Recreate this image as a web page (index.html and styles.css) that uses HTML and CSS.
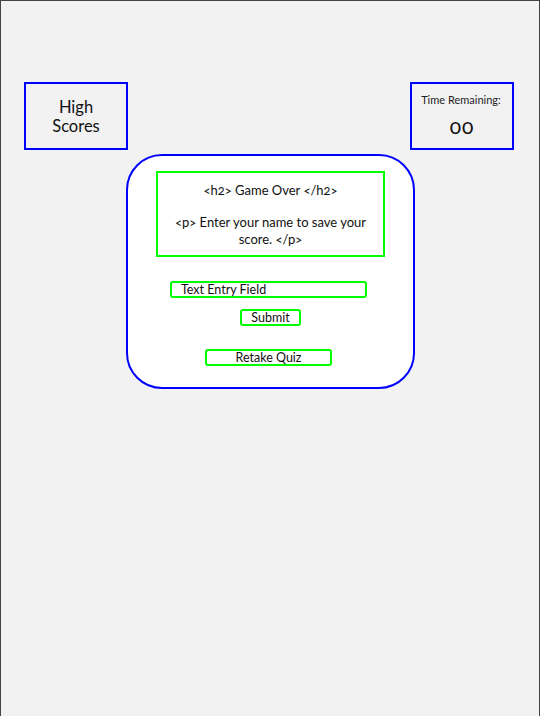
FILE: index.html
```html
<!DOCTYPE html>
<html>
<head>
<meta charset="utf-8">
<link rel="stylesheet" href="styles.css">
</head>
<body>
<div class="frame">
  <header class="top">
    <div class="box scores">High<br>Scores</div>
    <div class="box timer">
      <div class="timer-label">Time Remaining:</div>
      <div class="timer-value">00</div>
    </div>
  </header>
  <main class="card">
    <div class="message">
      <div class="msg-title">&lt;h2&gt; Game Over &lt;/h2&gt;</div>
      <div class="msg-text">&lt;p&gt; Enter your name to save your score. &lt;/p&gt;</div>
    </div>
    <div class="field">Text Entry Field</div>
    <div class="btn submit">Submit</div>
    <div class="btn retake">Retake Quiz</div>
  </main>
</div>
</body>
</html>
```
FILE: styles.css
```css
html, body {
  margin: 0;
  padding: 0;
}
body {
  background: #f2f2f2;
  font-family: Lato, "Open Sans", sans-serif;
  color: #111;
  font-variant-numeric: oldstyle-nums;
}
.frame {
  box-sizing: border-box;
  height: 716px;
  border-top: 1px solid #444;
  border-left: 1px solid #444;
  border-right: 1px solid #444;
  padding: 81px 25px 0 23px;
}
.top {
  display: flex;
  justify-content: space-between;
}
.box {
  box-sizing: border-box;
  width: 104px;
  height: 68px;
  border: 2px solid #0000ff;
}
.scores {
  display: flex;
  align-items: center;
  justify-content: center;
  text-align: center;
  font-size: 16.5px;
  line-height: 19px;
  padding-top: 2px;
}
.timer {
  display: flex;
  flex-direction: column;
  align-items: center;
  padding-top: 9px;
}
.timer-label {
  font-size: 11px;
  line-height: 14px;
  color: #222;
  margin-left: -2px;
}
.timer-value {
  margin-top: 9px;
  font-size: 21px;
  line-height: 20px;
  letter-spacing: 1px;
}
.card {
  box-sizing: border-box;
  width: 289px;
  margin: 4px 0 0 102px;
  height: 235px;
  background: #fff;
  border: 2px solid #0000ff;
  border-radius: 36px;
  display: flex;
  flex-direction: column;
  align-items: center;
  padding-top: 15px;
}
.message {
  box-sizing: border-box;
  width: 229px;
  height: 86px;
  border: 2px solid #00ff00;
  text-align: center;
  font-size: 13px;
  line-height: 17px;
  padding: 9px 12px 0;
}
.msg-text {
  margin-top: 15px;
}
.field, .btn {
  box-sizing: border-box;
  border: 2px solid #00ff00;
  border-radius: 3px;
  font-size: 12.5px;
  line-height: 13px;
  height: 17px;
}
.field {
  width: 197px;
  margin-top: 24px;
  margin-left: -4px;
  padding-left: 9px;
}
.btn {
  text-align: center;
}
.submit {
  width: 61px;
  margin-top: 11px;
}
.retake {
  width: 127px;
  margin-top: 23px;
  margin-left: -4px;
}
```
